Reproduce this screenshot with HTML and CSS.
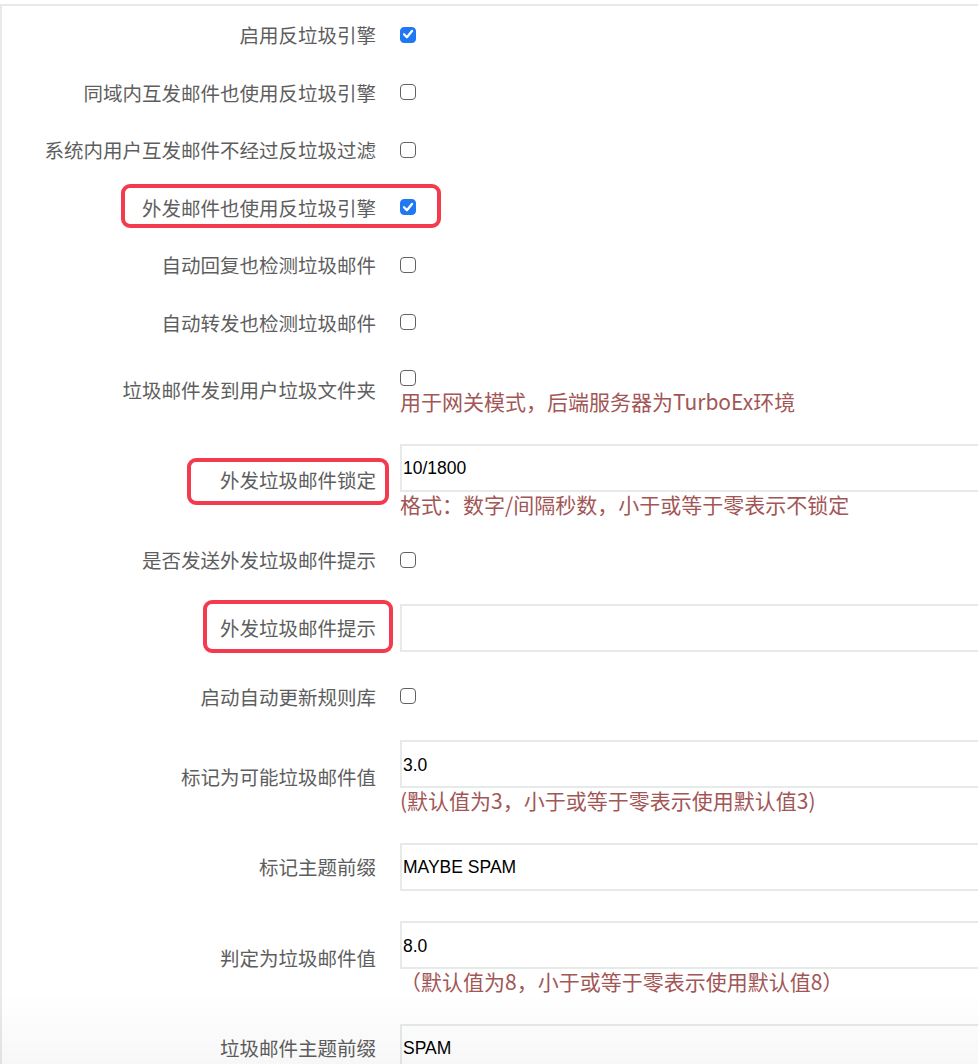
FILE: index.html
```html
<!DOCTYPE html>
<html lang="zh-CN">
<head>
  <meta charset="UTF-8">
  <title>反垃圾设置</title>
  <link rel="stylesheet" href="styles.css">
</head>
<body>
  <div class="form">
    <div class="row check">
      <label class="name">启用反垃圾引擎</label>
      <div class="field"><span class="box on"><svg viewBox="0 0 16 16"><polyline points="4,8.3 6.9,11.2 12,5"/></svg></span></div>
    </div>
    <div class="row check">
      <label class="name">同域内互发邮件也使用反垃圾引擎</label>
      <div class="field"><span class="box"></span></div>
    </div>
    <div class="row check">
      <label class="name">系统内用户互发邮件不经过反垃圾过滤</label>
      <div class="field"><span class="box"></span></div>
    </div>
    <div class="row check">
      <label class="name">外发邮件也使用反垃圾引擎</label>
      <div class="field"><span class="box on"><svg viewBox="0 0 16 16"><polyline points="4,8.3 6.9,11.2 12,5"/></svg></span></div>
      <span class="mark mark-a"></span>
    </div>
    <div class="row check">
      <label class="name">自动回复也检测垃圾邮件</label>
      <div class="field"><span class="box"></span></div>
    </div>
    <div class="row check">
      <label class="name">自动转发也检测垃圾邮件</label>
      <div class="field"><span class="box"></span></div>
    </div>
    <div class="row text">
      <label class="name">垃圾邮件发到用户垃圾文件夹</label>
      <div class="field">
        <span class="box stacked"></span>
        <div class="hint">用于网关模式，后端服务器为TurboEx环境</div>
      </div>
    </div>
    <div class="row text">
      <label class="name">外发垃圾邮件锁定</label>
      <div class="field">
        <input class="input" value="10/1800">
        <div class="hint">格式：数字/间隔秒数，小于或等于零表示不锁定</div>
      </div>
      <span class="mark mark-b"></span>
    </div>
    <div class="row check">
      <label class="name">是否发送外发垃圾邮件提示</label>
      <div class="field"><span class="box"></span></div>
    </div>
    <div class="row text">
      <label class="name">外发垃圾邮件提示</label>
      <div class="field"><input class="input" value=""></div>
      <span class="mark mark-c"></span>
    </div>
    <div class="row check">
      <label class="name">启动自动更新规则库</label>
      <div class="field"><span class="box"></span></div>
    </div>
    <div class="row text">
      <label class="name">标记为可能垃圾邮件值</label>
      <div class="field">
        <input class="input" value="3.0">
        <div class="hint">(默认值为3，小于或等于零表示使用默认值3)</div>
      </div>
    </div>
    <div class="row text">
      <label class="name">标记主题前缀</label>
      <div class="field"><input class="input" value="MAYBE SPAM"></div>
    </div>
    <div class="row text">
      <label class="name">判定为垃圾邮件值</label>
      <div class="field">
        <input class="input" value="8.0">
        <div class="hint">（默认值为8，小于或等于零表示使用默认值8）</div>
      </div>
    </div>
    <div class="row text">
      <label class="name">垃圾邮件主题前缀</label>
      <div class="field"><input class="input" value="SPAM"></div>
    </div>
  </div>
  <div class="fade"></div>
</body>
</html>
```

FILE: styles.css
```css
body {
  margin: 0;
  background: #fff;
  overflow: hidden;
  font-family: "Noto Sans CJK SC", "Noto Sans", sans-serif;
}
.form {
  margin-top: 4px;
  width: 1100px;
  border-top: 2px solid #e6ebea;
  border-left: 2px solid #e6ebea;
}
.row {
  display: grid;
  grid-template-columns: 374px 1fr;
  column-gap: 24px;
  align-items: center;
  position: relative;
}
.row.check { height: 57.5px; }
.row.text { padding: 15.3px 0; }
.name {
  text-align: right;
  font-size: 19.5px;
  color: #5e5e5e;
  white-space: nowrap;
}
.field { display: flex; flex-direction: column; align-items: flex-start; }
.box {
  display: block;
  width: 16px; height: 16px;
  box-sizing: border-box;
  border: 1.5px solid #626262;
  border-radius: 4px;
  background: #fff;
}
.box.on {
  background: #1f78f4;
  border-color: #1f78f4;
}
.box svg {
  display: block;
  width: 16px; height: 16px;
  margin: -1.5px;
  fill: none;
  stroke: #fff;
  stroke-width: 2.3;
  stroke-linecap: round;
  stroke-linejoin: round;
}
.box.stacked { margin: 4px 0 3px; }
.input {
  width: 100%;
  height: 48px;
  box-sizing: border-box;
  border: 2px solid #e6ebea;
  border-radius: 0;
  padding: 2px 1px 0;
  font-family: "Liberation Sans", Arial, sans-serif;
  font-size: 17.5px;
  color: #000;
  background: #fff;
  outline: none;
}
.hint {
  color: #a25656;
  font-size: 21px;
  line-height: 24px;
  white-space: nowrap;
}
.mark {
  position: absolute;
  border: 4px solid #f43a4d;
  border-radius: 9px;
  box-sizing: border-box;
  pointer-events: none;
}
.mark-a { left: 119px; top: 5px; width: 320px; height: 44px; }
.mark-b { left: 185px; top: 29px; width: 202px; height: 47px; }
.mark-c { left: 201px; top: 11px; width: 190px; height: 53px; }
.fade {
  position: fixed;
  left: 0; right: 0; bottom: 0;
  height: 70px;
  background: linear-gradient(rgba(0,0,0,0), rgba(0,0,0,0.03));
  pointer-events: none;
}
```
